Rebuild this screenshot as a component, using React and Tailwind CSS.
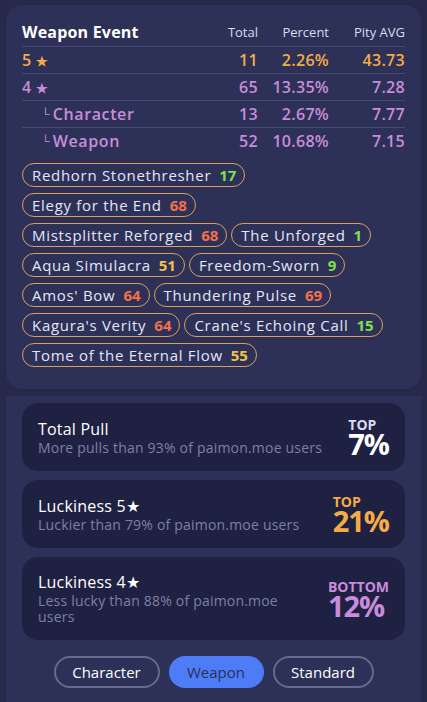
import React from 'react';

const rows = [
  { label: '5', star: true, total: '11', percent: '2.26%', pity: '43.73', color: 'text-[#f5ac45]' },
  { label: '4', star: true, total: '65', percent: '13.35%', pity: '7.28', color: 'text-[#c88cdb]' },
  { label: 'Character', sub: true, total: '13', percent: '2.67%', pity: '7.77', color: 'text-[#c88cdb]' },
  { label: 'Weapon', sub: true, total: '52', percent: '10.68%', pity: '7.15', color: 'text-[#c88cdb]' },
];

const GREEN = 'text-[#7fe04c]';
const RED = 'text-[#f2704a]';
const YELLOW = 'text-[#f3c149]';

const chipRows = [
  [{ name: 'Redhorn Stonethresher', pity: 17, color: GREEN }],
  [{ name: 'Elegy for the End', pity: 68, color: RED }],
  [
    { name: 'Mistsplitter Reforged', pity: 68, color: RED },
    { name: 'The Unforged', pity: 1, color: GREEN },
  ],
  [
    { name: 'Aqua Simulacra', pity: 51, color: YELLOW },
    { name: 'Freedom-Sworn', pity: 9, color: GREEN },
  ],
  [
    { name: "Amos' Bow", pity: 64, color: RED },
    { name: 'Thundering Pulse', pity: 69, color: RED },
  ],
  [
    { name: "Kagura's Verity", pity: 64, color: RED },
    { name: "Crane's Echoing Call", pity: 15, color: GREEN },
  ],
  [{ name: 'Tome of the Eternal Flow', pity: 55, color: YELLOW }],
];

const stats = [
  { title: 'Total Pull', desc: 'More pulls than 93% of paimon.moe users', tag: 'TOP', value: '7%', tagColor: 'text-[#d9dcef]', valueColor: 'text-white', textBox: 'flex-1' },
  { title: 'Luckiness 5★', desc: 'Luckier than 79% of paimon.moe users', tag: 'TOP', value: '21%', tagColor: 'text-[#f5ac45]', valueColor: 'text-[#f5ac45]', textBox: 'flex-1' },
  { title: 'Luckiness 4★', desc: 'Less lucky than 88% of paimon.moe users', tag: 'BOTTOM', value: '12%', tagColor: 'text-[#c88cdb]', valueColor: 'text-[#c88cdb]', textBox: 'w-[262px] mr-auto' },
];

export default function App() {
  return (
    <div
      className="min-h-screen bg-[#262949] pt-[5px] text-white"
      style={{ fontFamily: '"Open Sans", "Liberation Sans", sans-serif' }}
    >
      <div className="mx-[6px] rounded-2xl bg-[#2d3157] px-4 pt-[14px] pb-[22px]">
        <table className="w-full border-collapse">
          <thead>
            <tr className="h-[27px] border-b border-[#474b74]">
              <th className="text-left text-[16px] font-bold tracking-[0.2px]">Weapon Event</th>
              <th className="text-right text-[13px] font-normal text-[#d9dcef]">Total</th>
              <th className="w-[71px] text-right text-[13px] font-normal text-[#d9dcef]">Percent</th>
              <th className="w-[76px] text-right text-[13px] font-normal text-[#d9dcef]">Pity AVG</th>
            </tr>
          </thead>
          <tbody>
            {rows.map((r, i) => (
              <tr
                key={i}
                className={`h-[27px] text-[16px] font-semibold tracking-[0.3px] ${r.color} ${i < rows.length - 1 ? 'border-b border-[#474b74]' : ''}`}
              >
                <td className="text-left">
                  {r.sub ? (
                    <span className="pl-[19px]">
                      <span className="mr-[3px] align-[2px] text-[12px] font-normal">└</span>
                      <span className="tracking-[0.6px]">{r.label}</span>
                    </span>
                  ) : (
                    <span>
                      {r.label} <span className="text-[13px]">★</span>
                    </span>
                  )}
                </td>
                <td className="text-right">{r.total}</td>
                <td className="text-right">{r.percent}</td>
                <td className="text-right">{r.pity}</td>
              </tr>
            ))}
          </tbody>
        </table>

        <div className="mt-[9px] flex flex-col gap-[6px]">
          {chipRows.map((row, i) => (
            <div key={i} className="flex gap-[4px]">
              {row.map((c) => (
                <div
                  key={c.name}
                  className="flex h-[24px] items-center rounded-full border border-[#d9a05b] pl-[9px] pr-[8px] text-[15px] tracking-[0.7px] text-[#e3e6f6]"
                >
                  {c.name}
                  <span className={`ml-[8px] font-bold tracking-normal ${c.color}`}>{c.pity}</span>
                </div>
              ))}
            </div>
          ))}
        </div>
      </div>

      <div className="mx-[6px] mt-[7px] bg-[#2d3157] px-4 pt-[7px] pb-[20px]">
        <div className="flex flex-col gap-[9px]">
          {stats.map((s) => (
            <div key={s.title} className="flex items-center rounded-2xl bg-[#1f2142] py-[15px] pl-[16px] pr-[16px]">
              <div className={s.textBox}>
                <div className="text-[16px] leading-[21px] tracking-[0.2px] text-white">{s.title}</div>
                <div className="text-[14px] leading-[16px] tracking-[0.2px] text-[#7c80a3]">{s.desc}</div>
              </div>
              <div className="ml-[14px] flex flex-col items-start">
                <div className={`text-[14px] font-bold leading-[13px] ${s.tagColor}`}>{s.tag}</div>
                <div className={`text-[29px] font-bold leading-[25px] tracking-[-1px] ${s.valueColor}`}>{s.value}</div>
              </div>
            </div>
          ))}
        </div>

        <div className="mt-[16px] flex justify-center gap-[9px]">
          <button className="h-[32px] w-[106px] rounded-full border-2 border-[#666a8c] text-[15px] font-medium text-white">
            Character
          </button>
          <button className="h-[32px] w-[95px] rounded-full bg-[#4e7cf6] text-[15px] font-medium text-[#283056]">
            Weapon
          </button>
          <button className="h-[32px] w-[101px] rounded-full border-2 border-[#666a8c] text-[15px] font-medium text-white">
            Standard
          </button>
        </div>
      </div>
    </div>
  );
}
